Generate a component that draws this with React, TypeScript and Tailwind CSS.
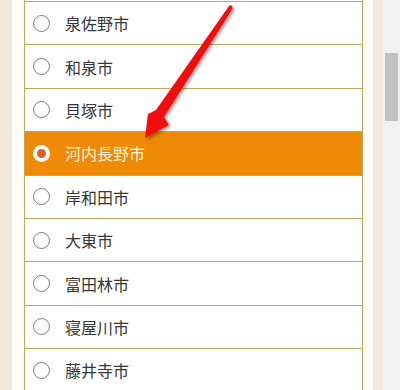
import React from 'react';

const cities = [
  '泉佐野市',
  '和泉市',
  '貝塚市',
  '河内長野市',
  '岸和田市',
  '大東市',
  '富田林市',
  '寝屋川市',
  '藤井寺市',
];

const selected = '河内長野市';

const Radio = ({ checked }: { checked: boolean }) =>
  checked ? (
    <span className="flex h-[17px] w-[17px] items-center justify-center rounded-full bg-white">
      <span className="h-[9px] w-[9px] rounded-full bg-[#dc5f24]" />
    </span>
  ) : (
    <span className="h-[17px] w-[17px] rounded-full border border-[#7a7a7a] bg-white" />
  );

const App = () => {
  return (
    <div
      className="relative flex h-[390px] w-[400px] overflow-hidden bg-white"
      style={{ fontFamily: '"Noto Sans CJK JP", "Noto Sans", sans-serif' }}
    >
      {/* page margins */}
      <div className="w-[12px] shrink-0 bg-[#f3e6dc]" />
      <div className="w-[12px] shrink-0 bg-[#fffcf7]" />

      {/* radio list */}
      <div className="w-[339px] shrink-0 border-x border-[#c4a55e] bg-white">
        <div className="h-[1px]" />
        {cities.map((city) => {
          const isSel = city === selected;
          return (
            <div
              key={city}
              className={`flex h-[43.4px] items-center border-t border-[#c4a55e] pl-[8px] ${
                isSel ? 'bg-[#ee8a06]' : 'bg-white'
              }`}
            >
              <Radio checked={isSel} />
              <span
                className={`ml-[15px] text-[16px] leading-none ${
                  isSel ? 'text-[#fff3dc]' : 'text-[#383838]'
                }`}
              >
                {city}
              </span>
            </div>
          );
        })}
      </div>

      <div className="w-[10px] shrink-0 bg-[#fffcf7]" />
      <div className="w-[10px] shrink-0 bg-[#f5e6de]" />

      {/* scrollbar */}
      <div className="w-[17px] shrink-0 bg-[#f1f1f1] pt-[53px] pl-[2px]">
        <div className="h-[68px] w-[13px] bg-[#c1c1c1]" />
      </div>

      {/* red arrow annotation */}
      <svg
        className="pointer-events-none absolute left-0 top-0"
        width="400"
        height="390"
        viewBox="0 0 400 390"
      >
        <defs>
          <filter id="shadow" x="-20%" y="-20%" width="140%" height="140%">
            <feDropShadow dx="2" dy="2" stdDeviation="1.6" floodColor="#000" floodOpacity="0.35" />
          </filter>
        </defs>
        <polygon
          points="231,5 233,8 164,117 169,125 145,138 148,114 156,110 229,6"
          fill="#f20a0a"
          filter="url(#shadow)"
        />
      </svg>
    </div>
  );
};

export default App;
